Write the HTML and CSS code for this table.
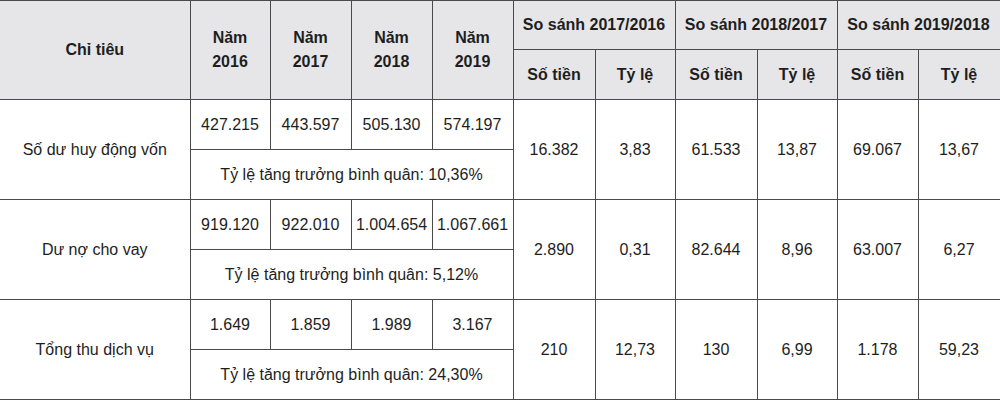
FILE: index.html
```html
<!DOCTYPE html>
<html lang="vi">
<head>
<meta charset="utf-8">
<link rel="stylesheet" href="styles.css">
</head>
<body>
<table class="data">
<colgroup>
<col class="c-name"><col class="c80"><col class="c81"><col class="c81"><col class="c81">
<col class="c82"><col class="c80"><col class="c82"><col class="c80"><col class="c81"><col class="c82">
</colgroup>
<thead>
<tr class="h1">
<th rowspan="2">Chỉ tiêu</th>
<th rowspan="2">Năm<br>2016</th>
<th rowspan="2">Năm<br>2017</th>
<th rowspan="2">Năm<br>2018</th>
<th rowspan="2">Năm<br>2019</th>
<th colspan="2">So sánh 2017/2016</th>
<th colspan="2">So sánh 2018/2017</th>
<th colspan="2">So sánh 2019/2018</th>
</tr>
<tr class="h2">
<th>Số tiền</th><th>Tỷ lệ</th>
<th>Số tiền</th><th>Tỷ lệ</th>
<th>Số tiền</th><th>Tỷ lệ</th>
</tr>
</thead>
<tbody>
<tr>
<td rowspan="2">Số dư huy động vốn</td>
<td>427.215</td><td>443.597</td><td>505.130</td><td>574.197</td>
<td rowspan="2">16.382</td><td rowspan="2">3,83</td>
<td rowspan="2">61.533</td><td rowspan="2">13,87</td>
<td rowspan="2">69.067</td><td rowspan="2">13,67</td>
</tr>
<tr><td colspan="4">Tỷ lệ tăng trưởng bình quân: 10,36%</td></tr>
<tr>
<td rowspan="2">Dư nợ cho vay</td>
<td>919.120</td><td>922.010</td><td>1.004.654</td><td>1.067.661</td>
<td rowspan="2">2.890</td><td rowspan="2">0,31</td>
<td rowspan="2">82.644</td><td rowspan="2">8,96</td>
<td rowspan="2">63.007</td><td rowspan="2">6,27</td>
</tr>
<tr><td colspan="4">Tỷ lệ tăng trưởng bình quân: 5,12%</td></tr>
<tr>
<td rowspan="2">Tổng thu dịch vụ</td>
<td>1.649</td><td>1.859</td><td>1.989</td><td>3.167</td>
<td rowspan="2">210</td><td rowspan="2">12,73</td>
<td rowspan="2">130</td><td rowspan="2">6,99</td>
<td rowspan="2">1.178</td><td rowspan="2">59,23</td>
</tr>
<tr><td colspan="4">Tỷ lệ tăng trưởng bình quân: 24,30%</td></tr>
</tbody>
</table>
</body>
</html>
```
FILE: styles.css
```css
html, body {
  margin: 0;
  padding: 0;
  background: #ffffff;
}
.data {
  border-collapse: collapse;
  table-layout: fixed;
  width: 1000px;
  font-family: "Liberation Sans", Arial, sans-serif;
  font-size: 16px;
  color: #1e1e1e;
}
.c-name { width: 190px; }
.c80 { width: 80px; }
.c81 { width: 81px; }
.c82 { width: 82px; }
.data th, .data td {
  border: 1px solid #4a4a4a;
  padding: 0;
  text-align: center;
  vertical-align: middle;
  height: 49px;
  line-height: 24px;
}
.data tr > :first-child {
  border-left: none;
}
.data th {
  background: #e6e6e8;
  font-weight: bold;
}
.data thead tr.h1 th {
  height: 48px;
}
```
